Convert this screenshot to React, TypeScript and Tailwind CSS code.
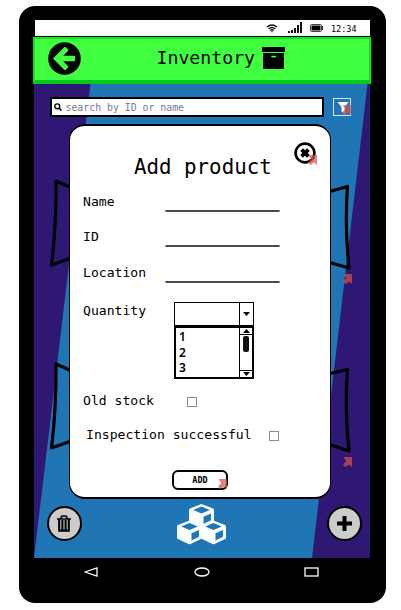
import React from "react";

function LinkMark({ className = "" }: { className?: string }) {
  return (
    <svg viewBox="0 0 9 10" className={`h-[10px] w-[9px] ${className}`} fill="#d9504c" fillOpacity="0.72">
      <path d="M0.5 0H9V10L6.4 7.4L2.4 10L0 7.600L3.200 4Z" />
    </svg>
  );
}

function StatusBar() {
  return (
    <div className="ml-[16px] flex h-[16px] w-[335px] items-center bg-white pl-[231px]">
      <svg viewBox="0 0 12 10" className="h-[9px] w-[12px]" fill="none" stroke="#111" strokeWidth="1.6">
        <path d="M0.5 3.4Q6 -1.4 11.5 3.4M2.4 5.4Q6 2.2 9.6 5.4M4.2 7.2Q6 5.6 7.8 7.2" />
        <circle cx="6" cy="8.6" r="0.8" fill="#111" stroke="none" />
      </svg>
      <svg viewBox="0 0 14 11" className="ml-[10px] mt-[-1px] h-[11px] w-[14px]" fill="#111">
        <path d="M0 9h2v2H0zM3 8h2v3H3zM6 6h2v5H6zM9 3h2v8H9zM12 0h2v11h-2z" />
      </svg>
      <svg viewBox="0 0 13 8" className="ml-[8px] mt-[-1px] h-[8px] w-[13px]">
        <rect x="0.5" y="0.5" width="11" height="7" rx="1" fill="#fff" stroke="#444" />
        <rect x="1.500" y="1.500" width="9" height="5" fill="#000" />
        <path d="M12.5 2v4" stroke="#333" />
      </svg>
      <span className="ml-[8px] mt-[2px] text-[8.5px] leading-none text-black">12:34</span>
    </div>
  );
}

function Header() {
  return (
    <header className="ml-[14px] mt-[1px] flex h-[47px] w-[338px] items-center border-2 border-b-[4px] border-[#05ed12] border-b-[#08c81c] bg-[#40ff40] pl-[13px]">
      <svg viewBox="0 0 33 33" className="mt-[-2px] h-[33px] w-[33px]">
        <circle cx="16.5" cy="16.5" r="16.3" fill="#000" />
        <path d="M5 16.500L16.200 5.200Q17 4.600 17.800 5.200L20 7.400Q20.600 8.200 20 9L15.200 13.700H26.200Q27 13.700 27 14.500V18.500Q27 19.300 26.200 19.300H15.200L20 24Q20.600 24.800 20 25.600L17.800 27.800Q17 28.400 16.200 27.800Z" fill="#40ff40" />
      </svg>
      <h1 className="ml-[75.500px] mt-[-2px] text-[18.2px] leading-none text-black">Inventory</h1>
      <svg viewBox="0 0 23 22" className="ml-[7px] mt-[-3px] h-[22px] w-[23px]">
        <path d="M0 0.5Q0 0 0.5 0H22.5Q23 0 23 0.5V5H0ZM1 6H22V21Q22 22 21 22H2Q1 22 1 21Z" fill="#000" />
        <path d="M10 9.6h3.4" stroke="#40ff40" strokeWidth="1.6" strokeLinecap="round" />
      </svg>
    </header>
  );
}

function Backdrop() {
  return (
    <svg viewBox="0 0 336 474" className="absolute inset-0 h-[474px] w-[336px]">
      <rect width="336" height="474" fill="#2f1774" />
      <path d="M56.5 0H333.5L278 474H0Z" fill="#2076b5" />
      <g fill="none" stroke="#000" strokeWidth="3.2" strokeLinejoin="round">
        <path d="M40 105L22 97Q22.500 140 17.500 181L40 173" />
        <path d="M40 288L22 280Q22.500 323 17.500 364L40 356" />
        <path d="M294 108L313.500 102.500Q310.500 142 315 184L294 178" />
        <path d="M294 290L313.500 285.500Q310.500 324 315 367L294 360" />
      </g>
    </svg>
  );
}

function SearchRow() {
  return (
    <div className="flex items-center pl-[16px]">
      <div className="flex h-[20px] w-[274px] items-center border-2 border-black bg-white pl-[2px]">
        <svg viewBox="0 0 9 9" className="h-[8px] w-[8px]" fill="none" stroke="#000">
          <circle cx="3.700" cy="3.700" r="2.800" strokeWidth="1.500" />
          <path d="M5.900 5.900L8.400 8.500" strokeWidth="1.800" />
        </svg>
        <span className="ml-[4px] mt-px text-[9.85px] leading-none text-[#777a88]">search by ID or name</span>
      </div>
      <div className="relative ml-[9px] h-[18px] w-[18px] border border-[#d5e5f0]">
        <svg viewBox="0 0 12 12" className="ml-[3px] mt-[3px] h-[12px] w-[12px]" fill="#fff">
          <path d="M0.500 0H11.500L7.800 5V12L4.500 9.500V5Z" />
        </svg>
        <LinkMark className="absolute bottom-0 right-[-1px]" />
      </div>
    </div>
  );
}

function Field({ label, className = "" }: { label: string; className?: string }) {
  return (
    <label className={`flex h-[22px] items-start ${className}`}>
      <span className="mt-[4px] w-[82px] leading-[14px]">{label}</span>
      <svg viewBox="0 0 115 2" className="mt-[19px] h-[2px] w-[115px]" stroke="#111" strokeWidth="1.500" strokeLinecap="round">
        <path d="M1 1H114" />
      </svg>
    </label>
  );
}

function QuantityPicker() {
  return (
    <div className="w-[80px]">
      <div className="flex h-[23px] border border-b-0 border-black">
        <span className="flex-1" />
        <span className="flex w-[14px] items-center justify-center border-l border-black">
          <svg viewBox="0 0 7 4" className="h-[4px] w-[7px]"><path d="M0 0H7L3.500 4Z" /></svg>
        </span>
      </div>
      <div className="flex h-[54px] border-2 border-t-[3px] border-black">
        <ul className="flex-1 pl-[3px] pt-[1px] font-['Noto_Sans'] text-[12px] font-semibold leading-[15.500px]">
          <li>1</li>
          <li>2</li>
          <li>3</li>
        </ul>
        <div className="flex w-[13px] flex-col items-center border-l border-black">
          <span className="flex h-[7px] w-full items-center justify-center border-b border-black">
            <svg viewBox="0 0 7 4" className="h-[4px] w-[7px]"><path d="M0 4H7L3.500 0Z" /></svg>
          </span>
          <span className="mt-[1px] h-[16px] w-[6px] rounded-[2px] bg-[#111]" />
          <span className="mt-auto flex h-[7px] w-full items-center justify-center border-t border-black">
            <svg viewBox="0 0 7 4" className="h-[4px] w-[7px]"><path d="M0 0H7L3.500 4Z" /></svg>
          </span>
        </div>
      </div>
    </div>
  );
}

function Checkbox({ className = "" }: { className?: string }) {
  return <span className={`h-[10px] w-[10px] border border-[#888b94] bg-white ${className}`} />;
}

function AddProduct() {
  return (
    <section className="relative ml-[35.500px] mt-[7px] h-[375px] w-[261.500px] rounded-[16px] border border-b-2 border-t-2 border-black bg-white text-[13.1px] text-black">
      <button className="absolute left-[224px] top-[16px]">
        <svg viewBox="0 0 22 22" className="h-[22px] w-[22px]">
          <circle cx="11" cy="11" r="9.400" fill="none" stroke="#000" strokeWidth="2.600" />
          <path d="M7.600 7.600L14.400 14.400M14.400 7.600L7.600 14.400" stroke="#000" strokeWidth="3.800" />
        </svg>
        <LinkMark className="absolute right-[-1px] top-[13px]" />
      </button>
      <h2 className="ml-[64px] mt-[29px] text-[20.800px] leading-[24px]">Add product</h2>
      <div className="ml-[13px]">
        <Field label="Name" className="mt-[12px]" />
        <Field label="ID" className="mt-[13px]" />
        <Field label="Location" className="mt-[14px]" />
      </div>
      <div className="ml-[13px] mt-[18px] flex items-start">
        <span className="mt-[1px] w-[91px] leading-[16px]">Quantity</span>
        <QuantityPicker />
      </div>
      <div className="ml-[13px] mt-[14px] flex h-[16px] items-center">
        <span>Old stock</span>
        <Checkbox className="ml-[33px] mt-[2px]" />
      </div>
      <div className="ml-[16px] mt-[18px] flex h-[16px] items-center">
        <span>Inspection successful</span>
        <Checkbox className="ml-[17.500px] mt-[2px]" />
      </div>
      <button className="relative ml-[102px] mt-[27px] flex h-[20px] w-[56px] items-center justify-center rounded-[6px] border-2 border-black text-[8.500px] font-bold">
        ADD
        <LinkMark className="absolute bottom-[-1px] right-[-1px]" />
      </button>
    </section>
  );
}

function Cube({ x, y }: { x: number; y: number }) {
  return (
    <g transform={`translate(${x} ${y})`}>
      <path d="M12.500 0L24 4.500Q25 5 25 6V17Q25 18 24 18.600L13.500 23.600Q12.500 24 11.500 23.600L1 18.600Q0 18 0 17V6Q0 5 1 4.500Z" fill="#fafffa" />
      <path d="M12.500 2.600L20.800 5.900L12.500 9.400L4.200 5.900ZM14.500 12.800L22 9.600V16.300L14.500 19.900Z" fill="#2076b5" />
    </g>
  );
}

function BottomActions() {
  return (
    <div className="mt-[5px] flex items-start pl-[13px]">
      <button className="mt-[2px] flex h-[35px] w-[35px] items-center justify-center rounded-full border-2 border-black bg-[#cccccc]">
        <svg viewBox="0 0 16 17" className="h-[17px] w-[16px]" fill="none" stroke="#000">
          <path d="M1 4H15M5 4L5.500 1.500Q5.600 1 6.500 1H9.500Q10.400 1 10.500 1.500L11 4" strokeWidth="1.700" />
          <path d="M3.200 4V15.600H12.800V4M6.400 5V15.600M9.600 5V15.600" strokeWidth="2.100" />
        </svg>
      </button>
      <svg viewBox="0 0 49 41" className="ml-[95px] h-[41px] w-[49px]">
        <Cube x={12} y={0} />
        <Cube x={0} y={16.500} />
        <Cube x={24} y={16.500} />
      </svg>
      <button className="ml-[101px] mt-[2px] flex h-[35px] w-[35px] items-center justify-center rounded-full border-2 border-black bg-[#cccccc]">
        <svg viewBox="0 0 15 15" className="h-[15px] w-[15px]"><path d="M5.500 0h4v5.500H15v4H9.500V15h-4V9.500H0v-4h5.500z" /></svg>
      </button>
    </div>
  );
}

function NavBar() {
  return (
    <nav className="flex h-[28px] items-center pl-[64.500px]">
      <svg viewBox="0 0 14 10" className="h-[10px] w-[14px]" fill="none" stroke="#fff" strokeWidth="1.300"><path d="M1 5L13 1V9Z" /></svg>
      <svg viewBox="0 0 16 10" className="ml-[96.500px] h-[10px] w-[16px]" fill="none" stroke="#fff" strokeWidth="1.300"><ellipse cx="8" cy="5" rx="7" ry="4" /></svg>
      <svg viewBox="0 0 15 10" className="ml-[94px] h-[10px] w-[15px]" fill="none" stroke="#fff" strokeWidth="1.300"><rect x="1" y="1" width="13" height="8" /></svg>
    </nav>
  );
}

export default function App() {
  return (
    <div className="h-[610px] w-[401px] overflow-hidden bg-white pl-[19px] pt-[6px] font-['DejaVu_Sans_Mono',monospace]">
      <div className="h-[597px] w-[366.500px] rounded-[16px] bg-black pt-[14px]">
        <StatusBar />
        <Header />
        <main className="relative ml-[14.500px] h-[474px] w-[336px] pt-[13px]">
          <Backdrop />
          <div className="relative">
            <SearchRow />
            <AddProduct />
            <BottomActions />
          </div>
          <LinkMark className="absolute left-[309px] top-[190px]" />
          <LinkMark className="absolute left-[309px] top-[373px]" />
        </main>
        <NavBar />
      </div>
    </div>
  );
}
